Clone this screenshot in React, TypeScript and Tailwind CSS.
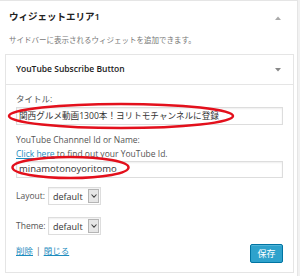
const FONT = { fontFamily: '"Open Sans", "Noto Sans CJK JP", sans-serif' };

function Select() {
  return (
    <div className="flex h-[18px] w-[53px] items-center border border-[#dddddd] bg-white shadow-[inset_0_1px_2px_rgba(0,0,0,0.07)]">
      <span className="flex-1 pl-[4px] text-[9px] leading-none text-[#333]">default</span>
      <span className="mr-[1px] flex h-[14px] w-[11px] items-center justify-center border border-[#b5b5b5] bg-[#e6e6e6]">
        <svg width="6" height="4" viewBox="0 0 6 4">
          <path d="M0.5 0.5 L3 3.2 L5.5 0.5" fill="none" stroke="#444" strokeWidth="1.1" />
        </svg>
      </span>
    </div>
  );
}

export default function App() {
  return (
    <div className="relative h-[276px] w-[300px] overflow-hidden bg-[#f1f1f1]" style={FONT}>
      <div className="h-[276px] w-[298px] border-t border-r border-[#e5e5e5] bg-white">
        {/* Sidebar header */}
        <div className="flex items-center justify-between pl-[9px] pr-[16px] pt-[9px]">
          <h3 className="text-[9.5px] font-semibold leading-[14px] text-[#222]">ウィジェットエリア1</h3>
          <svg width="6" height="4" viewBox="0 0 6 4" className="mt-[1px]">
            <path d="M0 4 L3 0.5 L6 4 Z" fill="#aaaaaa" />
          </svg>
        </div>
        <p className="mt-[10px] pl-[9px] text-[7.5px] leading-[12px] text-[#777]">
          サイドバーに表示されるウィジェットを追加できます。
        </p>

        {/* Widget box */}
        <div className="ml-[5px] mt-[8px] w-[289px] border border-[#e5e5e5] bg-white">
          <div className="flex h-[30px] items-center justify-between border-b border-[#e5e5e5] pl-[10px] pr-[12px]">
            <span className="text-[8.5px] font-semibold text-[#222]">YouTube Subscribe Button</span>
            <svg width="6" height="4" viewBox="0 0 6 4">
              <path d="M0 0 L6 0 L3 3.5 Z" fill="#888888" />
            </svg>
          </div>

          <div className="px-[10px] pb-[9px] pt-[8px]">
            <label className="block text-[8.5px] leading-[12px] text-[#555]">タイトル:</label>
            <div className="mt-[2px] flex h-[18px] items-center border border-[#dddddd] pl-[2px] text-[8.6px] text-[#333] shadow-[inset_0_1px_2px_rgba(0,0,0,0.07)]">
              関西グルメ動画1300本！ヨリトモチャンネルに登録
            </div>

            <label className="mt-[9px] block text-[8.5px] leading-[12px] text-[#555]">YouTube Channnel Id or Name:</label>
            <p className="mt-[2px] text-[8.5px] leading-[12px] text-[#555]">
              <a className="text-[#1e8cbe] underline">Click here</a> to find out your YouTube Id.
            </p>
            <div className="mt-[1px] flex h-[17px] items-center border border-[#dddddd] pl-[2px] text-[9.5px] text-[#333] shadow-[inset_0_1px_2px_rgba(0,0,0,0.07)]">
              minamotonoyoritomo
            </div>

            <div className="mt-[9px] flex items-center">
              <span className="w-[32px] text-[8.5px] text-[#555]">Layout:</span>
              <Select />
            </div>
            <div className="mt-[12px] flex items-center">
              <span className="w-[32px] text-[8.5px] text-[#555]">Theme:</span>
              <Select />
            </div>

            <div className="mt-[9px] flex items-start justify-between">
              <div className="flex items-center gap-[3px] pt-[1px] text-[8.5px] leading-[12px]">
                <a className="text-[#1e8cbe] underline">削除</a>
                <span className="text-[#666]">|</span>
                <a className="text-[#1e8cbe] underline">閉じる</a>
              </div>
              <button className="flex h-[19px] w-[33px] items-center justify-center rounded-[2px] border border-[#0074a2] bg-[#2ea2cc] text-[9px] text-white shadow-[inset_0_1px_0_rgba(120,200,230,0.5)]">
                保存
              </button>
            </div>
          </div>
        </div>
      </div>

      {/* Red annotation ellipses */}
      <svg className="pointer-events-none absolute left-0 top-0" width="300" height="276">
        <ellipse cx="121" cy="116" rx="112" ry="12" fill="none" stroke="#e3101c" strokeWidth="2.5" />
        <ellipse cx="70.5" cy="167.5" rx="58" ry="10.5" fill="none" stroke="#e3101c" strokeWidth="2.5" />
      </svg>
    </div>
  );
}
